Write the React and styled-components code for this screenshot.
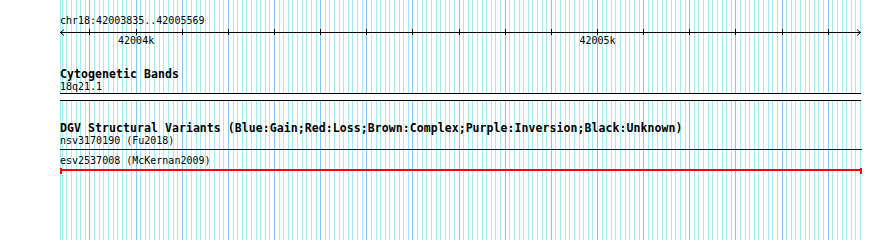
import React from 'react';
import styled, { createGlobalStyle } from 'styled-components';

const START = 42003835;
const END = 42005569;
const X0 = 60;
const SPAN = 800;
const toX = (bp) => X0 + ((bp - START) * SPAN) / (END - START);

const Global = createGlobalStyle`
  html, body { margin: 0; padding: 0; background: #fff; }
  body { font-family: "DejaVu Sans Mono", "Liberation Mono", monospace; color: #000; }
`;

const Panel = styled.div`
  position: relative;
  width: 890px;
  height: 240px;
  overflow: hidden;
  background: #fff;
`;

const GridLayer = styled.svg`
  position: absolute;
  left: 0;
  top: 0;
  width: 890px;
  height: 240px;
`;

const Tracks = styled.div`
  position: relative;
  display: flex;
  flex-direction: column;
  padding-top: 15px;
  width: 890px;
`;

const TextRow = styled.div`
  padding-left: 60px;
  font-size: 10px;
  line-height: 12px;
  height: 12px;
  white-space: nowrap;
`;

const Ruler = styled.svg`
  display: block;
  width: 890px;
  height: 20px;
`;

const Section = styled.section`
  display: flex;
  flex-direction: column;
  margin-top: 21px;
`;

const TrackTitle = styled.div`
  padding-left: 60px;
  font-size: 11.5px;
  letter-spacing: 0.07px;
  font-weight: bold;
  line-height: 13px;
  height: 13px;
  white-space: nowrap;
`;

const Band = styled.div`
  margin-left: 60px;
  width: 801px;
  height: 6px;
  background: #fff;
  border-top: 1px solid #000;
  border-bottom: 1px solid #000;
`;

const FeatureGlyph = styled.svg`
  display: block;
  width: 890px;
  height: 8px;
`;

const minor = [];
for (let bp = 42003840; bp <= 42005570; bp += 10) {
  const x = Math.floor(toX(bp));
  if (x >= 58 && x <= 861) minor.push({ x, major: bp % 100 === 0 });
}
const majors = minor.filter((m) => m.major);

function Grid() {
  return (
    <GridLayer viewBox="0 0 890 240" shapeRendering="crispEdges">
      <rect x={60} y={0} width={1} height={240} fill="#a4eced" />
      {minor.filter((m) => !m.major).map((m) => (
        <rect key={m.x} x={m.x} y={0} width={1} height={240} fill="#a4eced" />
      ))}
      {majors.map((m) => (
        <rect key={'M' + m.x} x={m.x} y={0} width={1} height={240} fill="#84c6f2" />
      ))}
    </GridLayer>
  );
}

function Scale() {
  const labels = [42004000, 42005000];
  return (
    <Ruler viewBox="0 0 890 20">
      <g shapeRendering="crispEdges">
        <rect x={60} y={5} width={801} height={1} fill="#000" />
        {majors.map((m) => (
          <rect key={m.x} x={m.x} y={2} width={1} height={6} fill="#000" />
        ))}
      </g>
      <polyline points="64,2.5 60.5,5.5 64,8.5" fill="none" stroke="#000" strokeWidth="1" />
      <polyline points="857,2.5 860.5,5.5 857,8.5" fill="none" stroke="#000" strokeWidth="1" />
      {labels.map((bp) => (
        <text
          key={bp}
          x={toX(bp)}
          y={17}
          textAnchor="middle"
          fontSize="10"
          fontFamily='"DejaVu Sans Mono", monospace'
          fill="#000"
        >
          {bp / 1000}k
        </text>
      ))}
    </Ruler>
  );
}

const variants = [
  { name: 'nsv3170190 (Fu2018)', color: 'rgb(0,0,200)', thick: 1, ends: false },
  { name: 'esv2537008 (McKernan2009)', color: '#ff0000', thick: 2, ends: true },
];

function Variant({ v }) {
  return (
    <>
      <TextRow>{v.name}</TextRow>
      <FeatureGlyph viewBox="0 0 890 8" shapeRendering="crispEdges">
        <rect x={60} y={2} width={802} height={v.thick} fill={v.color} />
        {v.ends && (
          <>
            <rect x={60} y={1} width={2} height={6} fill={v.color} />
            <rect x={860} y={1} width={2} height={6} fill={v.color} />
          </>
        )}
      </FeatureGlyph>
    </>
  );
}

export default function App() {
  return (
    <Panel>
      <Global />
      <Grid />
      <Tracks>
        <TextRow>chr18:42003835..42005569</TextRow>
        <Scale />
        <Section>
          <TrackTitle>Cytogenetic Bands</TrackTitle>
          <TextRow>18q21.1</TextRow>
          <Band />
        </Section>
        <Section>
          <TrackTitle>
            DGV Structural Variants (Blue:Gain;Red:Loss;Brown:Complex;Purple:Inversion;Black:Unknown)
          </TrackTitle>
          {variants.map((v) => (
            <Variant key={v.name} v={v} />
          ))}
        </Section>
      </Tracks>
    </Panel>
  );
}
